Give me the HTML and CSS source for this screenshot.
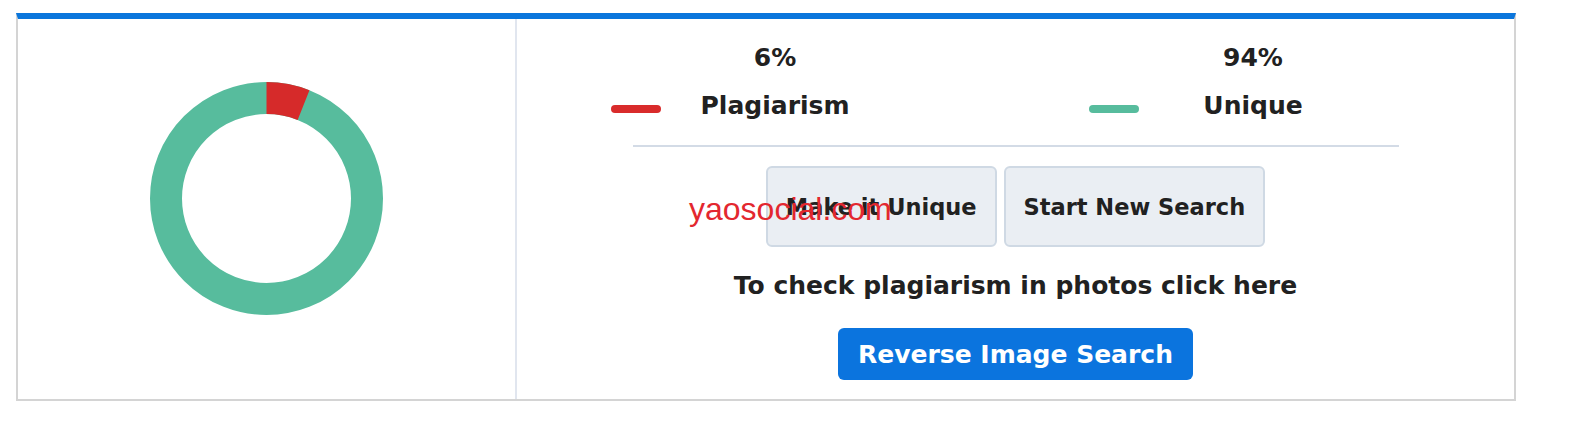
FILE: index.html
```html
<!DOCTYPE html>
<html lang="en">
<head>
<meta charset="utf-8">
<title>Plagiarism result</title>
<link rel="stylesheet" href="styles.css">
</head>
<body>
<div class="page">
  <div class="card">
    <div class="chart-col">
      <svg class="donut" width="233" height="233" viewBox="0 0 233 233">
        <circle cx="116.5" cy="116.5" r="100.5" fill="none" stroke="#57bc9d" stroke-width="32"/>
        <circle cx="116.5" cy="116.5" r="100.5" fill="none" stroke="#d62a2a" stroke-width="32"
                stroke-dasharray="37.9 700" transform="rotate(-90 116.5 116.5)"/>
      </svg>
    </div>
    <div class="result-col">
      <div class="legend">
        <div class="legend-item">
          <span class="pct">6%</span>
          <span class="swatch swatch-red"></span>
          <span class="label">Plagiarism</span>
        </div>
        <div class="legend-item">
          <span class="pct">94%</span>
          <span class="swatch swatch-green"></span>
          <span class="label">Unique</span>
        </div>
      </div>
      <hr class="divider">
      <div class="actions">
        <button class="btn-light">Make it Unique</button>
        <button class="btn-light">Start New Search</button>
      </div>
      <p class="hint">To check plagiarism in photos click here</p>
      <button class="btn-primary">Reverse Image Search</button>
    </div>
    <span class="watermark">yaosocial.com</span>
  </div>
</div>
</body>
</html>
```

FILE: styles.css
```css
html, body {
  margin: 0;
  padding: 0;
  background: #ffffff;
}

body {
  font-family: "DejaVu Sans", "Noto Sans", sans-serif;
  color: #212121;
}

.page {
  padding: 13px 0 0 16px;
}

.card {
  position: relative;
  width: 1496px;
  height: 380px;
  border-top: 6px solid #0b76dc;
  border-left: 2px solid #d4d4d4;
  border-right: 2px solid #d4d4d4;
  border-bottom: 2px solid #d4d4d4;
  display: grid;
  grid-template-columns: 499px 1fr;
}

.chart-col {
  border-right: 2px solid #e1e6ef;
  display: flex;
  justify-content: center;
  align-items: flex-start;
  padding-top: 63px;
}

.donut {
  display: block;
}

.result-col {
  display: flex;
  flex-direction: column;
  align-items: center;
  padding-top: 21px;
}

.legend {
  align-self: stretch;
  display: flex;
  gap: 200px;
  padding-left: 94px;
}

.legend-item {
  display: grid;
  grid-template-columns: 50px 228px;
  grid-template-rows: 36px 36px;
  row-gap: 12px;
  align-items: center;
}

.pct {
  grid-column: 2;
  grid-row: 1;
  text-align: center;
  font-size: 25px;
  font-weight: 700;
  line-height: 36px;
}

.swatch {
  grid-column: 1;
  grid-row: 2;
  height: 8px;
  border-radius: 4px;
  margin-top: 6px;
}

.swatch-red { background: #d92b2b; }
.swatch-green { background: #57bc9d; }

.label {
  grid-column: 2;
  grid-row: 2;
  text-align: center;
  font-size: 25px;
  font-weight: 700;
  line-height: 36px;
}

.divider {
  width: 766px;
  height: 0;
  border: 0;
  border-top: 2px solid #d3dbe6;
  margin: 21px 0 0 0;
}

.actions {
  display: flex;
  gap: 7px;
  margin-top: 19px;
}

.btn-light {
  height: 81px;
  padding: 0 18px;
  background: #eaeef3;
  border: 2px solid #cfd9e4;
  border-radius: 6px;
  font-family: inherit;
  font-size: 22.5px;
  font-weight: 700;
  color: #212121;
}

.hint {
  margin: 21px 0 0 0;
  font-size: 25px;
  font-weight: 700;
  line-height: 36px;
}

.btn-primary {
  margin-top: 24px;
  height: 52px;
  padding: 0 20px;
  background: #0b74de;
  border: 0;
  border-radius: 6px;
  color: #ffffff;
  font-family: inherit;
  font-size: 25px;
  font-weight: 700;
}

.watermark {
  position: absolute;
  left: 671px;
  top: 172px;
  font-family: "Liberation Sans", Arial, sans-serif;
  font-size: 32px;
  line-height: 36px;
  color: #e3272f;
  pointer-events: none;
}
```
